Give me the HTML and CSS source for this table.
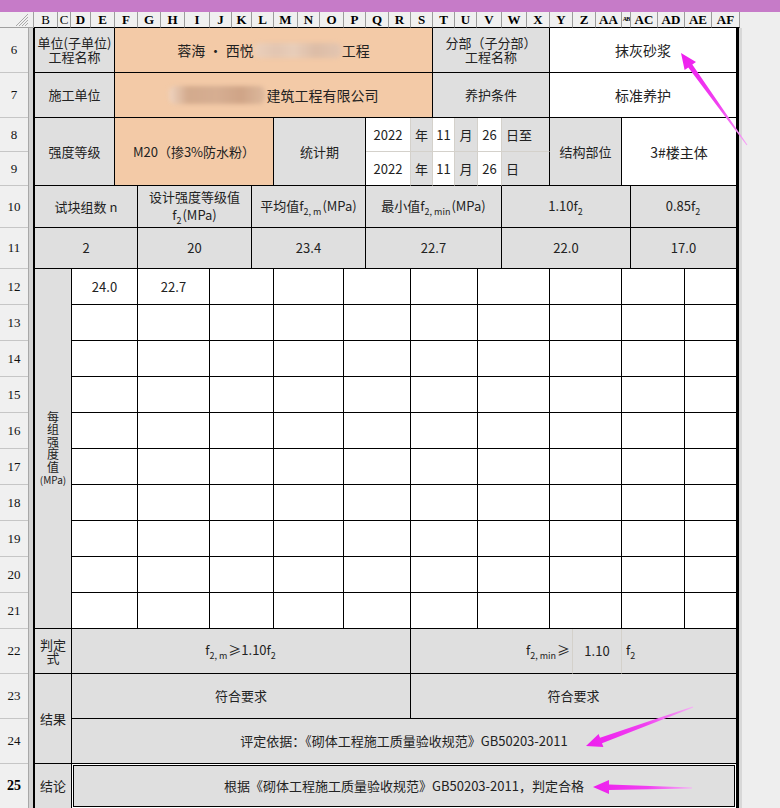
FILE: index.html
```html
<!DOCTYPE html>
<html lang="zh">
<head>
<meta charset="utf-8">
<title>砂浆强度评定</title>
<link rel="stylesheet" href="styles.css">
</head>
<body>
<div class="titlebar"></div>
<div class="colhead">
  <div class="corner">
    <svg class="hatch" width="12" height="12" viewBox="0 0 12 12"><path d="M0 12 L12 0 M3 12 L12 3 M6 12 L12 6 M9 12 L12 9" stroke="#a9a9a9" stroke-width="1"/></svg>
  </div>
  <div class="h w24 reg">B</div><div class="h w13 reg">C</div><div class="h w20">D</div><div class="h w24">E</div>
  <div class="h w23">F</div><div class="h w23">G</div><div class="h w24">H</div><div class="h w25">I</div>
  <div class="h w22">J</div><div class="h w20">K</div><div class="h w22">L</div><div class="h w24">M</div>
  <div class="h w22">N</div><div class="h w24">O</div><div class="h w22">P</div><div class="h w23">Q</div>
  <div class="h w22">R</div><div class="h w22">S</div><div class="h w22">T</div><div class="h w22">U</div>
  <div class="h w25">V</div><div class="h w25">W</div><div class="h w23">X</div><div class="h w23">Y</div>
  <div class="h w23">Z</div><div class="h w26">AA</div><div class="h w9 tiny">AB</div><div class="h w27">AC</div>
  <div class="h w27">AD</div><div class="h w27">AE</div><div class="h w28">AF</div>
  <div class="rest"></div>
</div>

<div class="sheet">
  <div class="rowheads">
    <div class="rh h45">6</div><div class="rh h45">7</div><div class="rh h34">8</div><div class="rh h34">9</div>
    <div class="rh h42">10</div><div class="rh h41">11</div>
    <div class="rh h36">12</div><div class="rh h36">13</div><div class="rh h36">14</div><div class="rh h36">15</div>
    <div class="rh h36">16</div><div class="rh h36">17</div><div class="rh h36">18</div><div class="rh h36">19</div>
    <div class="rh h36">20</div><div class="rh h36">21</div>
    <div class="rh h45">22</div><div class="rh h45">23</div><div class="rh h45">24</div><div class="rh h45 sel">25</div>
  </div>
  <div class="strip"></div>

  <div class="cell grey a1"><div>单位(子单位)<br>工程名称</div></div>
  <div class="cell orange a2 big"><span>蓉海 · 西悦</span><span class="blur blur1"></span><span>工程</span></div>
  <div class="cell grey a3"><div>分部（子分部）<br>工程名称</div></div>
  <div class="cell white a4 big">抹灰砂浆</div>

  <div class="cell grey b1">施工单位</div>
  <div class="cell orange b2 big"><span class="blur blur2"></span><span>建筑工程有限公司</span></div>
  <div class="cell grey b3">养护条件</div>
  <div class="cell white b4 big">标准养护</div>

  <div class="cell grey c1">强度等级</div>
  <div class="cell orange c2">M20（掺3%防水粉）</div>
  <div class="cell grey c3">统计期</div>
  <div class="cell white d1 lr lb">2022</div>
  <div class="cell grey d2 lr lb">年</div>
  <div class="cell white d3 lr lb">11</div>
  <div class="cell grey d4 lr lb">月</div>
  <div class="cell white d5 lr lb">26</div>
  <div class="cell grey d6 lb left">日至</div>
  <div class="cell white e1 lr">2022</div>
  <div class="cell grey e2 lr">年</div>
  <div class="cell white e3 lr">11</div>
  <div class="cell grey e4 lr">月</div>
  <div class="cell white e5 lr">26</div>
  <div class="cell grey e6 left">日</div>
  <div class="cell grey c4">结构部位</div>
  <div class="cell white c5 big">3#楼主体</div>

  <div class="cell grey f1">试块组数 n</div>
  <div class="cell grey f2 tall"><div>设计强度等级值<br>f<span class="sb">2</span>(MPa)</div></div>
  <div class="cell grey f3"><div>平均值f<span class="sb">2, m</span>(MPa)</div></div>
  <div class="cell grey f4"><div>最小值f<span class="sb">2, min</span>(MPa)</div></div>
  <div class="cell grey f5"><div>1.10f<span class="sb">2</span></div></div>
  <div class="cell grey f6"><div>0.85f<span class="sb">2</span></div></div>

  <div class="cell grey g1">2</div>
  <div class="cell grey g2">20</div>
  <div class="cell grey g3">23.4</div>
  <div class="cell grey g4">22.7</div>
  <div class="cell grey g5">22.0</div>
  <div class="cell grey g6">17.0</div>

  <div class="cell grey h1 vert"><div>每<br>组<br>强<br>度<br>值<br><span class="mpa">(MPa)</span></div></div>
  <div class="data">
    <div class="dc">24.0</div><div class="dc">22.7</div><div class="dc"></div><div class="dc"></div><div class="dc"></div><div class="dc"></div><div class="dc"></div><div class="dc"></div><div class="dc"></div><div class="dc"></div>
    <div class="dc"></div><div class="dc"></div><div class="dc"></div><div class="dc"></div><div class="dc"></div><div class="dc"></div><div class="dc"></div><div class="dc"></div><div class="dc"></div><div class="dc"></div>
    <div class="dc"></div><div class="dc"></div><div class="dc"></div><div class="dc"></div><div class="dc"></div><div class="dc"></div><div class="dc"></div><div class="dc"></div><div class="dc"></div><div class="dc"></div>
    <div class="dc"></div><div class="dc"></div><div class="dc"></div><div class="dc"></div><div class="dc"></div><div class="dc"></div><div class="dc"></div><div class="dc"></div><div class="dc"></div><div class="dc"></div>
    <div class="dc"></div><div class="dc"></div><div class="dc"></div><div class="dc"></div><div class="dc"></div><div class="dc"></div><div class="dc"></div><div class="dc"></div><div class="dc"></div><div class="dc"></div>
    <div class="dc"></div><div class="dc"></div><div class="dc"></div><div class="dc"></div><div class="dc"></div><div class="dc"></div><div class="dc"></div><div class="dc"></div><div class="dc"></div><div class="dc"></div>
    <div class="dc"></div><div class="dc"></div><div class="dc"></div><div class="dc"></div><div class="dc"></div><div class="dc"></div><div class="dc"></div><div class="dc"></div><div class="dc"></div><div class="dc"></div>
    <div class="dc"></div><div class="dc"></div><div class="dc"></div><div class="dc"></div><div class="dc"></div><div class="dc"></div><div class="dc"></div><div class="dc"></div><div class="dc"></div><div class="dc"></div>
    <div class="dc"></div><div class="dc"></div><div class="dc"></div><div class="dc"></div><div class="dc"></div><div class="dc"></div><div class="dc"></div><div class="dc"></div><div class="dc"></div><div class="dc"></div>
    <div class="dc"></div><div class="dc"></div><div class="dc"></div><div class="dc"></div><div class="dc"></div><div class="dc"></div><div class="dc"></div><div class="dc"></div><div class="dc"></div><div class="dc"></div>
  </div>

  <div class="cell grey j1 pd"><div>判定<br>式</div></div>
  <div class="cell grey j2"><div>f<span class="sb">2, m</span>≥1.10f<span class="sb">2</span></div></div>
  <div class="cell grey j3 lr right"><div>f<span class="sb">2, min</span>≥</div></div>
  <div class="cell grey j4 lr">1.10</div>
  <div class="cell grey j5 left"><div>f<span class="sb">2</span></div></div>

  <div class="cell grey k1">结果</div>
  <div class="cell grey k2">符合要求</div>
  <div class="cell grey k3">符合要求</div>
  <div class="cell grey l2">评定依据：《砌体工程施工质量验收规范》GB50203-2011</div>

  <div class="cell grey m1">结论</div>
  <div class="cell grey m2 selected">根据《砌体工程施工质量验收规范》GB50203-2011，判定合格</div>

  <div class="rborder"></div>
  <div class="filler"></div>
</div>

<svg class="arrows" width="780" height="808" viewBox="0 0 780 808">
  <defs>
    <linearGradient id="g1" gradientUnits="userSpaceOnUse" x1="747" y1="145" x2="681" y2="53">
      <stop offset="0" stop-color="#f6a6f6"/><stop offset="0.45" stop-color="#f040f0"/><stop offset="1" stop-color="#ee1eee"/>
    </linearGradient>
    <linearGradient id="g2" gradientUnits="userSpaceOnUse" x1="693" y1="707" x2="586" y2="746">
      <stop offset="0" stop-color="#f6b0f6"/><stop offset="0.45" stop-color="#f040f0"/><stop offset="1" stop-color="#ee1eee"/>
    </linearGradient>
    <linearGradient id="g3" gradientUnits="userSpaceOnUse" x1="692" y1="788" x2="593" y2="787">
      <stop offset="0" stop-color="#f6b0f6"/><stop offset="0.45" stop-color="#f040f0"/><stop offset="1" stop-color="#ee1eee"/>
    </linearGradient>
  </defs>
  <polygon fill="url(#g1)" points="681,53 696,62 692.3,64.5 747.4,144.7 746.6,145.3 688.3,67.5 684.6,70.1"/>
  <polygon fill="url(#g2)" points="586,746 598.6,733.9 600,737.7 692.8,706.5 693.2,707.5 602,743.3 603.4,747.1"/>
  <polygon fill="url(#g3)" points="593,787 609,780 609,784.5 692,787.5 692,788.5 609,790 609,794"/>
</svg>
</body>
</html>
```

FILE: styles.css
```css
* { box-sizing: border-box; }
html, body { margin: 0; padding: 0; }
body {
  width: 780px;
  height: 808px;
  overflow: hidden;
  background: #eeeeee;
  font-family: "Noto Sans CJK SC", "Noto Sans", sans-serif;
  color: #222;
  position: relative;
}

.titlebar { height: 12px; background: #c67bc8; }

/* column header */
.colhead { display: flex; height: 16px; background: #f0f0f0; }
.colhead .corner {
  width: 34px;
  flex: none;
  border-right: 1px solid #a0a0a0;
  border-bottom: 1px solid #a0a0a0;
  position: relative;
}
.hatch { position: absolute; right: 5px; bottom: 1px; }
.colhead .h {
  flex: none;
  border-right: 1px solid #9c9c9c;
  border-bottom: 1px solid #000;
  font: bold 13px/15px "Liberation Serif", serif;
  text-align: center;
  color: #000;
  overflow: hidden;
  white-space: nowrap;
}
.colhead .h.reg { font-weight: normal; }
.colhead .h.tiny { font-size: 6px; letter-spacing: -1px; }
.colhead .rest { flex: 1; background: #eeeeee; }
.w9 { width: 9px; } .w13 { width: 13px; } .w20 { width: 20px; } .w22 { width: 22px; }
.w23 { width: 23px; } .w24 { width: 24px; } .w25 { width: 25px; } .w26 { width: 26px; }
.w27 { width: 27px; } .w28 { width: 28px; }

/* sheet */
.sheet {
  display: grid;
  grid-template-columns: 29px 6px 37px 43px 23px 72px 42px 22px 70px 22px 45px 22px 22px 23px 24px 48px 23px 49px 9px 54px 52px 2px 1fr;
  grid-template-rows: 45px 45px 34px 34px 42px 41px repeat(10, 36px) 45px 45px 45px 45px;
}

.rowheads { grid-area: 1 / 1 / 21 / 2; display: flex; flex-direction: column; background: #f0f0f0; border-right: 1px solid #a8a8a8; }
.rh {
  flex: none;
  display: flex; align-items: center; justify-content: center;
  border-bottom: 1px solid #c6c6c6;
  font: 13px "Liberation Serif", serif;
  color: #111;
}
.rh.sel { font-weight: bold; font-size: 14px; color: #000; }
.h45 { height: 45px; } .h34 { height: 34px; } .h42 { height: 42px; } .h41 { height: 41px; } .h36 { height: 36px; }

.strip { grid-area: 1 / 2 / 21 / 3; background: #d4d4d4; border-right: 2px solid #000; }
.rborder { grid-area: 1 / 22 / 21 / 23; background: #000; }
.filler { grid-area: 1 / 23 / 21 / 24; background: #eeeeee; border-left: 3px solid #d8d8d8; }

.cell {
  display: flex; align-items: center; justify-content: center;
  text-align: center;
  border-right: 1px solid #000;
  border-bottom: 1px solid #000;
  font-size: 13px;
  line-height: 14px;
  white-space: nowrap;
  overflow: hidden;
}
.grey { background: #dfdfdf; }
.white { background: #ffffff; }
.orange { background: #f3caa7; }
.big { font-size: 14px; }
.lr { border-right-color: #d4d1cb; }
.lb { border-bottom-color: #d4d1cb; }
.left { justify-content: flex-start; padding-left: 4px; }
.right { justify-content: flex-end; padding-right: 2px; }
.tall { line-height: 18px; }
.pd { line-height: 13px; }

.sb { font-size: 9px; position: relative; top: 4px; margin: 0 1px 0 0; }

.blur { display: inline-block; filter: blur(2px); border-radius: 6px; }
.blur1 { width: 88px; height: 15px; background: linear-gradient(90deg, #ecd0bb 0%, #e2c5b1 25%, #e8cdb9 45%, #dcbca6 70%, #e4c6b1 100%); }
.blur2 { width: 96px; height: 18px; margin-right: 2px; background: linear-gradient(90deg, #efd4c0 0%, #d3aa8d 20%, #d6ae92 50%, #cfa487 75%, #ddb99d 100%); }

.a1 { grid-area: 1 / 3 / 2 / 5; }
.a2 { grid-area: 1 / 5 / 2 / 13; }
.a3 { grid-area: 1 / 13 / 2 / 17; }
.a4 { grid-area: 1 / 17 / 2 / 22; }
.b1 { grid-area: 2 / 3 / 3 / 5; }
.b2 { grid-area: 2 / 5 / 3 / 13; }
.b3 { grid-area: 2 / 13 / 3 / 17; }
.b4 { grid-area: 2 / 17 / 3 / 22; }
.c1 { grid-area: 3 / 3 / 5 / 5; }
.c2 { grid-area: 3 / 5 / 5 / 9; }
.c3 { grid-area: 3 / 9 / 5 / 11; }
.c4 { grid-area: 3 / 17 / 5 / 19; }
.c5 { grid-area: 3 / 19 / 5 / 22; }
.d1 { grid-area: 3 / 11 / 4 / 12; }
.d2 { grid-area: 3 / 12 / 4 / 13; }
.d3 { grid-area: 3 / 13 / 4 / 14; }
.d4 { grid-area: 3 / 14 / 4 / 15; }
.d5 { grid-area: 3 / 15 / 4 / 16; }
.d6 { grid-area: 3 / 16 / 4 / 17; }
.e1 { grid-area: 4 / 11 / 5 / 12; }
.e2 { grid-area: 4 / 12 / 5 / 13; }
.e3 { grid-area: 4 / 13 / 5 / 14; }
.e4 { grid-area: 4 / 14 / 5 / 15; }
.e5 { grid-area: 4 / 15 / 5 / 16; }
.e6 { grid-area: 4 / 16 / 5 / 17; }
.f1 { grid-area: 5 / 3 / 6 / 6; }
.f2 { grid-area: 5 / 6 / 6 / 8; }
.f3 { grid-area: 5 / 8 / 6 / 11; }
.f4 { grid-area: 5 / 11 / 6 / 16; }
.f5 { grid-area: 5 / 16 / 6 / 20; }
.f6 { grid-area: 5 / 20 / 6 / 22; }
.g1 { grid-area: 6 / 3 / 7 / 6; }
.g2 { grid-area: 6 / 6 / 7 / 8; }
.g3 { grid-area: 6 / 8 / 7 / 11; }
.g4 { grid-area: 6 / 11 / 7 / 16; }
.g5 { grid-area: 6 / 16 / 7 / 20; }
.g6 { grid-area: 6 / 20 / 7 / 22; }
.h1 { grid-area: 7 / 3 / 17 / 4; }
.vert { font-size: 12px; line-height: 12.5px; }
.mpa { font-size: 10px; }
.j1 { grid-area: 17 / 3 / 18 / 4; }
.j2 { grid-area: 17 / 4 / 18 / 12; }
.j3 { grid-area: 17 / 12 / 18 / 18; }
.j4 { grid-area: 17 / 18 / 18 / 19; }
.j5 { grid-area: 17 / 19 / 18 / 22; }
.k1 { grid-area: 18 / 3 / 20 / 4; }
.k2 { grid-area: 18 / 4 / 19 / 12; }
.k3 { grid-area: 18 / 12 / 19 / 22; }
.l2 { grid-area: 19 / 4 / 20 / 22; }
.m1 { grid-area: 20 / 3 / 21 / 4; }
.m2 { grid-area: 20 / 4 / 21 / 22; }
.selected { box-shadow: inset 0 0 0 1px #ffffff, inset 0 0 0 2px #000000; }

.data {
  grid-area: 7 / 4 / 17 / 22;
  display: grid;
  grid-template-columns: 66px 72px 64px 70px 67px 67px 72px 72px 63px 52px;
  grid-template-rows: repeat(10, 36px);
  background: #fff;
}
.dc {
  display: flex; align-items: center; justify-content: center;
  border-right: 1px solid #000;
  border-bottom: 1px solid #000;
  font-size: 13px;
}

.arrows { position: absolute; left: 0; top: 0; pointer-events: none; }
```
